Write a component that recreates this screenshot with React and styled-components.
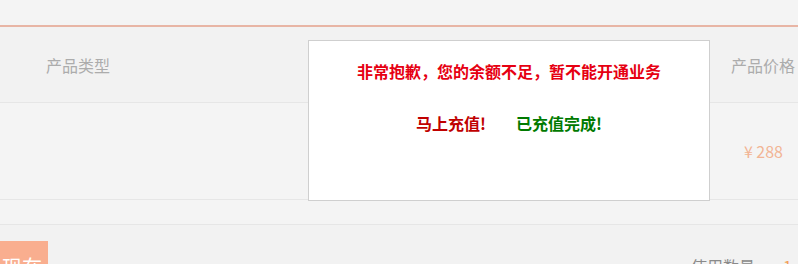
import React from "react";
import styled, { createGlobalStyle } from "styled-components";

const Global = createGlobalStyle`
  html, body { margin: 0; padding: 0; background: #f4f4f4; overflow: hidden; }
  body { font-family: "Microsoft YaHei", "Noto Sans CJK SC", "Liberation Sans", sans-serif; }
`;

const Page = styled.div`
  position: relative;
  width: 798px;
  height: 264px;
  overflow: hidden;
  background: #f4f4f4;
`;

const TopBar = styled.div`
  height: 25px;
  background: #f4f4f4;
  border-bottom: 2px solid #e8b5a5;
`;

const Row = styled.div`
  display: flex;
  align-items: center;
  justify-content: space-between;
  height: ${(p) => p.$h}px;
  background: ${(p) => p.$bg || "#f4f4f4"};
  border-bottom: 1px solid #e6e6e6;
  padding: 0 ${(p) => p.$pr || 0}px 0 ${(p) => p.$pl || 0}px;
`;

const HeadCell = styled.span`
  font-size: 16px;
  color: #acacac;
  line-height: 20px;
  white-space: nowrap;
`;

const Price = styled.span`
  font-size: 16px;
  color: #f2b595;
  line-height: 20px;
  margin-left: auto;
`;

const Footer = styled.div`
  display: flex;
  justify-content: space-between;
  align-items: flex-start;
  padding-top: 16px;
  background: #f2f2f2;
  height: 60px;
`;

const ActionButton = styled.button`
  margin-left: -40px;
  width: 88px;
  height: 40px;
  border: none;
  background: #f9ae8f;
  color: #fff;
  font-family: inherit;
  font-size: 20px;
  line-height: 24px;
  text-align: right;
  padding: 11px 6px 0 0;
`;

const Count = styled.div`
  display: flex;
  gap: 28px;
  padding-top: 15px;
  margin-right: 6px;
  font-size: 16px;
  line-height: 20px;
  color: #8a8a8a;
  white-space: nowrap;
`;

const CountNum = styled.span`
  color: #f2a05a;
`;

const Dialog = styled.div`
  position: absolute;
  left: 308px;
  top: 40px;
  width: 402px;
  height: 161px;
  background: #fff;
  border: 1px solid #cfcfcf;
  display: flex;
  flex-direction: column;
  align-items: center;
  box-sizing: border-box;
`;

const Message = styled.div`
  margin-top: 19px;
  font-size: 16px;
  font-weight: bold;
  color: #e60012;
  line-height: 22px;
  white-space: nowrap;
`;

const Actions = styled.div`
  display: flex;
  gap: 30px;
  margin-top: 30px;
`;

const Link = styled.a`
  font-size: 16px;
  font-weight: bold;
  line-height: 22px;
  color: ${(p) => p.$color};
  text-decoration: none;
  cursor: pointer;
`;

export default function App() {
  return (
    <>
      <Global />
      <Page>
        <TopBar />
        <Row $h={75} $bg="#f2f2f2" $pl={46} $pr={3}>
          <HeadCell>产品类型</HeadCell>
          <HeadCell>产品价格</HeadCell>
        </Row>
        <Row $h={96} $pr={15}>
          <Price>¥ 288</Price>
        </Row>
        <Row $h={24} />
        <Footer>
          <ActionButton>现在</ActionButton>
          <Count>
            <span>使用数量</span>
            <CountNum>1</CountNum>
          </Count>
        </Footer>
        <Dialog>
          <Message>非常抱歉，您的余额不足，暂不能开通业务</Message>
          <Actions>
            <Link $color="#c00000">马上充值!</Link>
            <Link $color="#007a00">已充值完成!</Link>
          </Actions>
        </Dialog>
      </Page>
    </>
  );
}
